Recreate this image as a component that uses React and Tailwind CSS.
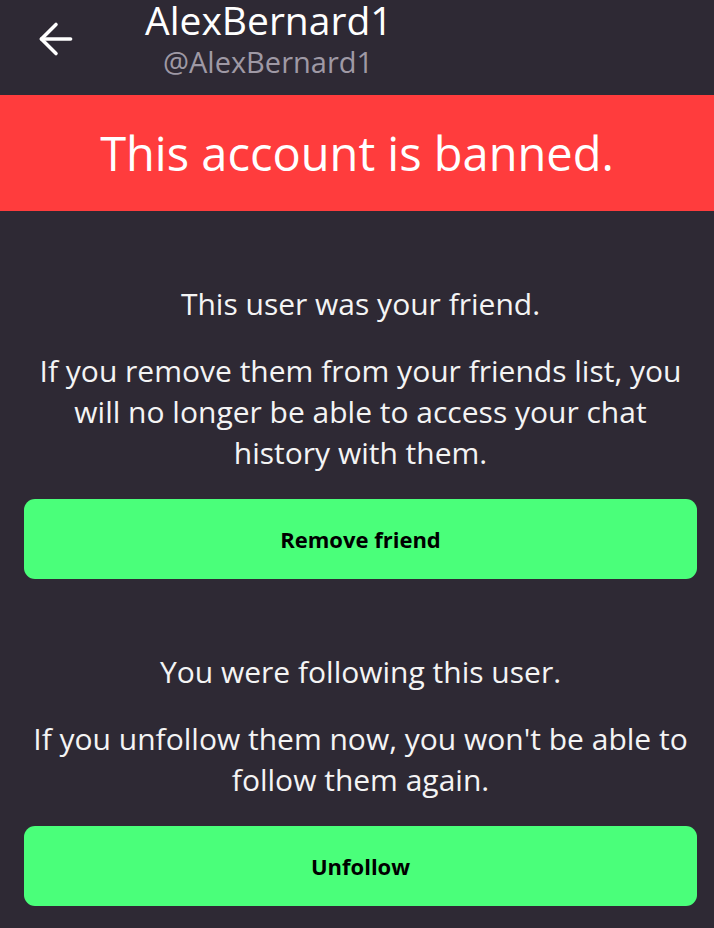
import { ArrowLeft } from 'lucide-react'

const SANS = { fontFamily: '"Open Sans", "Noto Sans", sans-serif' }

function Section({ title, body, action }) {
  return (
    <div className="flex flex-col items-center">
      <p className="text-[30px] leading-[41px] text-[#f4f4f4] text-center">{title}</p>
      <p className="mt-[26px] text-[30px] leading-[41px] text-[#f4f4f4] text-center">{body}</p>
      <button className="mt-[26px] w-full h-[80px] rounded-[11px] bg-[#4aff7a] text-black text-[22px] font-bold">
        {action}
      </button>
    </div>
  )
}

export default function App() {
  return (
    <div className="w-[714px] h-[928px] bg-[#2e2934] overflow-hidden" style={SANS}>
      <header className="h-[95px] flex items-start">
        <div className="w-[145px] pl-[31px] pt-[14px]">
          <ArrowLeft size={50} strokeWidth={1.7} className="text-white" />
        </div>
        <div className="flex flex-col">
          <span className="text-[39px] leading-[40px] text-white">AlexBernard1</span>
          <span className="ml-[18px] mt-[3px] text-[29px] leading-[38px] text-[#9f99a5]">@AlexBernard1</span>
        </div>
      </header>
      <div className="h-[116px] bg-[#ff3c3d] flex items-center justify-center">
        <h1 className="text-[47px] text-white">This account is banned.</h1>
      </div>
      <main className="pl-[24px] pr-[17px] pt-[72px] flex flex-col gap-[72px]">
        <Section
          title="This user was your friend."
          body="If you remove them from your friends list, you will no longer be able to access your chat history with them."
          action="Remove friend"
        />
        <Section
          title="You were following this user."
          body="If you unfollow them now, you won't be able to follow them again."
          action="Unfollow"
        />
      </main>
    </div>
  )
}
